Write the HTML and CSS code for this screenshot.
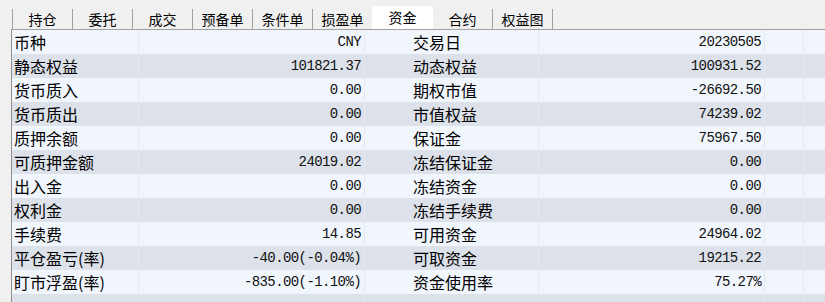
FILE: index.html
```html
<!DOCTYPE html>
<html lang="zh-CN">
<head>
  <meta charset="UTF-8">
  <title>资金</title>
  <link rel="stylesheet" href="styles.css">
</head>
<body>
  <div class="tabs">
    <div class="tab">持仓</div>
    <div class="tab">委托</div>
    <div class="tab">成交</div>
    <div class="tab">预备单</div>
    <div class="tab">条件单</div>
    <div class="tab">损盈单</div>
    <div class="tab active">资金</div>
    <div class="tab">合约</div>
    <div class="tab last">权益图</div>
  </div>

  <div class="grid">
    <div class="row"><span class="label">币种</span><span class="value">CNY</span><span class="label label2">交易日</span><span class="value">20230505</span><span class="pad"></span><span class="rest"></span></div>
    <div class="row"><span class="label">静态权益</span><span class="value">101821.37</span><span class="label label2">动态权益</span><span class="value">100931.52</span><span class="pad"></span><span class="rest"></span></div>
    <div class="row"><span class="label">货币质入</span><span class="value">0.00</span><span class="label label2">期权市值</span><span class="value">-26692.50</span><span class="pad"></span><span class="rest"></span></div>
    <div class="row"><span class="label">货币质出</span><span class="value">0.00</span><span class="label label2">市值权益</span><span class="value">74239.02</span><span class="pad"></span><span class="rest"></span></div>
    <div class="row"><span class="label">质押余额</span><span class="value">0.00</span><span class="label label2">保证金</span><span class="value">75967.50</span><span class="pad"></span><span class="rest"></span></div>
    <div class="row"><span class="label">可质押金额</span><span class="value">24019.02</span><span class="label label2">冻结保证金</span><span class="value">0.00</span><span class="pad"></span><span class="rest"></span></div>
    <div class="row"><span class="label">出入金</span><span class="value">0.00</span><span class="label label2">冻结资金</span><span class="value">0.00</span><span class="pad"></span><span class="rest"></span></div>
    <div class="row"><span class="label">权利金</span><span class="value">0.00</span><span class="label label2">冻结手续费</span><span class="value">0.00</span><span class="pad"></span><span class="rest"></span></div>
    <div class="row"><span class="label">手续费</span><span class="value">14.85</span><span class="label label2">可用资金</span><span class="value">24964.02</span><span class="pad"></span><span class="rest"></span></div>
    <div class="row"><span class="label">平仓盈亏(率)</span><span class="value">-40.00(-0.04%)</span><span class="label label2">可取资金</span><span class="value">19215.22</span><span class="pad"></span><span class="rest"></span></div>
    <div class="row"><span class="label">盯市浮盈(率)</span><span class="value">-835.00(-1.10%)</span><span class="label label2">资金使用率</span><span class="value">75.27%</span><span class="pad"></span><span class="rest"></span></div>
    <div class="row filler"><span class="label"></span><span class="value"></span><span class="label label2"></span><span class="value"></span><span class="pad"></span><span class="rest"></span></div>
  </div>
</body>
</html>
```

FILE: styles.css
```css
body {
  margin: 0;
  background-color: #f0f0f0;
  font-family: "Noto Sans CJK SC", sans-serif;
  color: #000;
  overflow: hidden;
}
.tabs {
  display: flex;
  align-items: flex-end;
  height: 29px;
  padding-left: 12px;
}
.tab {
  width: 59px;
  height: 20px;
  line-height: 20px;
  border-left: 1px solid #a0a0a0;
  text-align: center;
  font-size: 14px;
}
.tab.last {
  border-right: 1px solid #a0a0a0;
}
.tab.active {
  background-color: #fff;
  height: 23px;
  line-height: 22px;
  border-left-color: #fff;
}
.tab.active + .tab {
  border-left-color: #fff;
}
.grid {
  margin-left: 11px;
  border-left: 1px solid #8f8f8f;
  border-top: 1px solid #a0a0a0;
}
.row {
  display: grid;
  grid-template-columns: 127px 226px 174px 226px 39px 1fr;
  height: 24px;
  background-color: #f1f6fd;
}
.row:nth-child(even) {
  background-color: #dde2ea;
}
.row span {
  border-right: 1px solid #e6eaf0;
  line-height: 24px;
  white-space: nowrap;
  overflow: hidden;
}
.row .rest {
  border-right: none;
}
.label {
  font-size: 16px;
  padding-left: 2px;
}
.label2 {
  padding-left: 48px;
}
.value {
  font-family: "Liberation Mono", monospace;
  font-size: 14px;
  letter-spacing: -0.6px;
  text-align: right;
  padding-right: 3px;
  color: #111;
}
.filler {
  height: 10px;
}
```
